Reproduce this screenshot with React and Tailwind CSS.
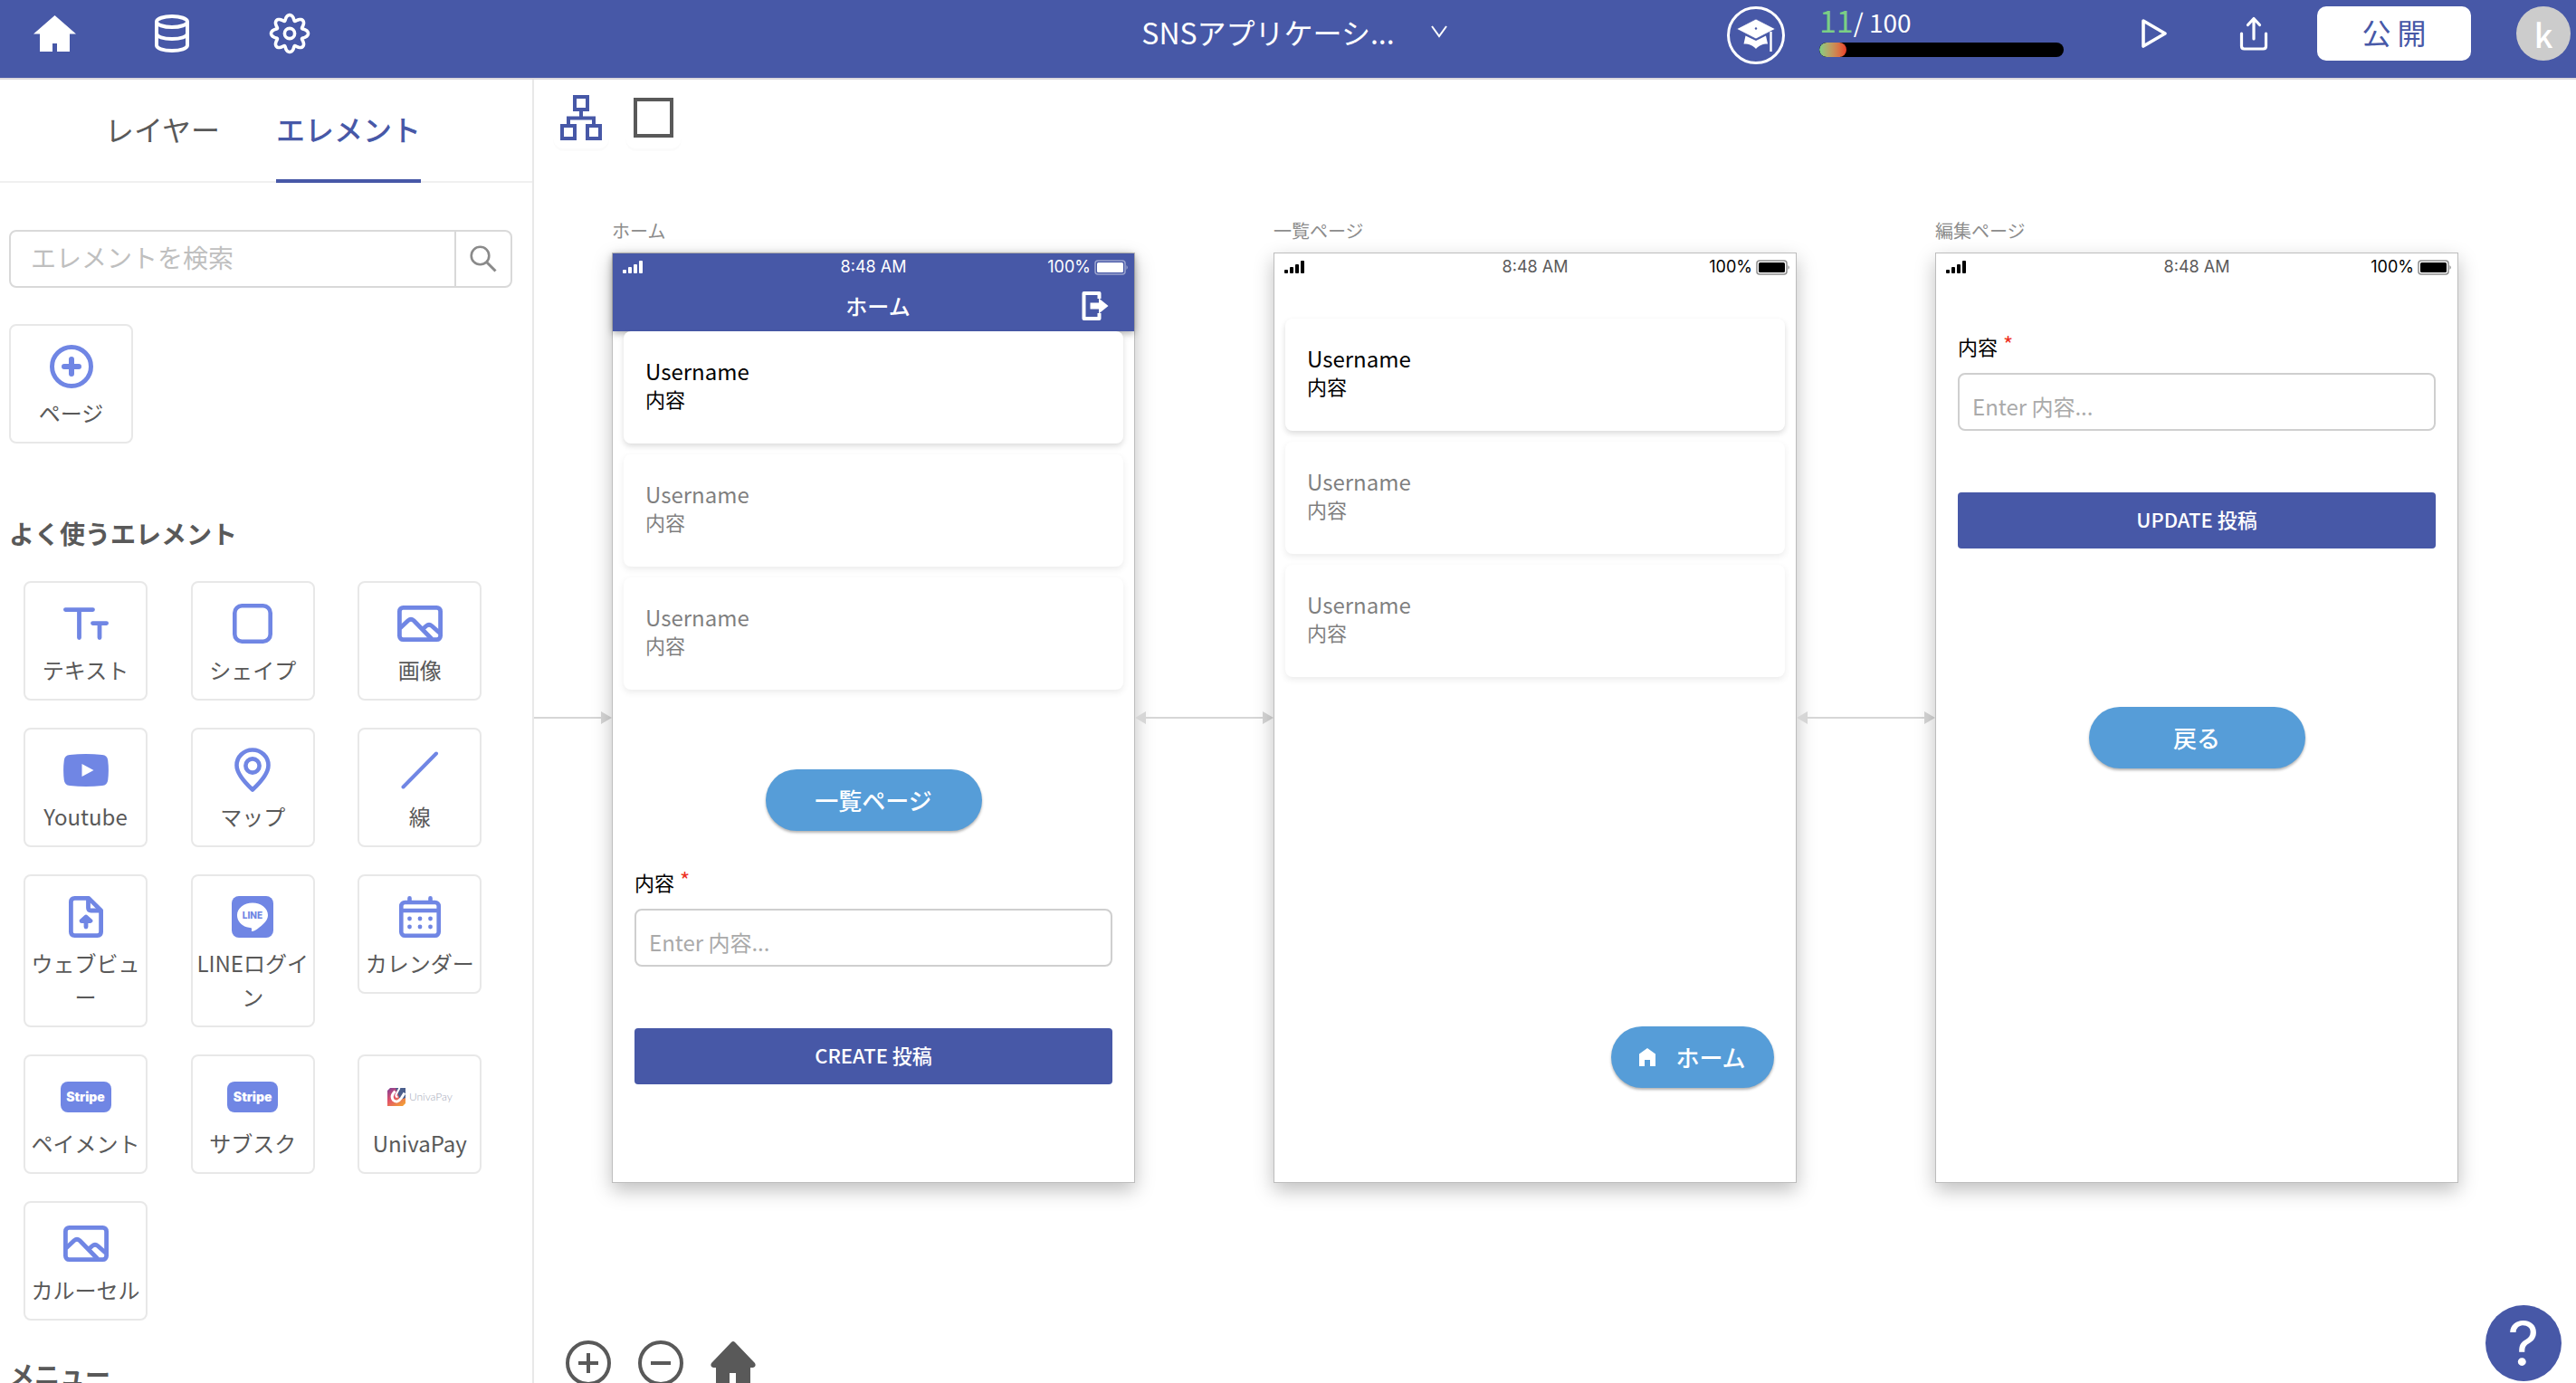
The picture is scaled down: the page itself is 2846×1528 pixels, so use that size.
import React, { useState } from "react";

const HomeIcon = () => (
  <svg width="47" height="40" viewBox="0 0 47 40" fill="currentColor">
    <path d="M23.5 0L47 20.5H40V40H26V31H21V40H7V20.5H0Z" />
  </svg>
);

const DatabaseIcon = () => (
  <svg width="38" height="42" viewBox="0 0 38 42" fill="none" stroke="currentColor" strokeWidth="4">
    <ellipse cx="19" cy="8" rx="17" ry="6" />
    <path d="M2 8V34C2 37.5 9.5 40 19 40S36 37.5 36 34V8" />
    <path d="M2 21C2 24.5 9.5 27 19 27S36 24.5 36 21" />
  </svg>
);

// eight soft teeth around the centre
const gearPath =
  Array.from({ length: 144 }, (_, i) => {
    const a = (i / 144) * Math.PI * 2;
    const r = 17.6 + 2.9 * Math.cos(8 * a);
    const twist = a + 0.04 * Math.sin(8 * a);
    const x = (23 + r * Math.cos(twist)).toFixed(2);
    const y = (23 + r * Math.sin(twist)).toFixed(2);
    return `${i ? "L" : "M"}${x} ${y}`;
  }).join("") + "Z";

const GearIcon = () => (
  <svg width="46" height="46" viewBox="0 0 46 46" fill="none" stroke="currentColor" strokeWidth="3.6" strokeLinejoin="round">
    <path d={gearPath} />
    <circle cx="23" cy="23" r="5.6" />
  </svg>
);

const GraduationIcon = () => (
  <svg width="64" height="64" viewBox="0 0 64 64" fill="none">
    <circle cx="32" cy="32" r="30.5" stroke="white" strokeWidth="3" />
    <path d="M20.5 32.5L32 38L43 32.5L45 41.5C39 41.5 35 43.5 32 47C29 43.5 25 41.5 18.5 41.5Z" fill="white" />
    <path d="M10.5 25L32 14L53.5 25L32 36Z" fill="white" stroke="#4758a7" strokeWidth="0.8" />
    <circle cx="32" cy="24.5" r="1.2" fill="#4758a7" />
    <path d="M48.5 28V50" stroke="white" strokeWidth="2.4" />
  </svg>
);

const PlayIcon = () => (
  <svg width="30" height="34" viewBox="0 0 30 34" fill="none" stroke="currentColor" strokeWidth="3.6" strokeLinejoin="round">
    <path d="M3 3L27 17L3 31Z" />
  </svg>
);

const ShareIcon = () => (
  <svg width="32" height="38" viewBox="0 0 32 38" fill="none" stroke="currentColor" strokeWidth="3.2" strokeLinecap="round" strokeLinejoin="round">
    <path d="M16 25V3M9.5 9.5L16 2.5L22.5 9.5" />
    <path d="M2.5 19V33Q2.5 36 5.5 36H26.5Q29.5 36 29.5 33V19" />
  </svg>
);

const SitemapIcon = () => (
  <svg width="46" height="50" viewBox="0 0 46 50" fill="none" stroke="currentColor" strokeWidth="4">
    <rect x="16" y="2" width="14" height="14" />
    <path d="M23 16V25M9 34V25.5H37V34" />
    <rect x="2" y="34" width="14" height="14" />
    <rect x="30" y="34" width="14" height="14" />
  </svg>
);

const SquareIcon = () => (
  <svg width="46" height="46" viewBox="0 0 46 46" fill="none" stroke="currentColor" strokeWidth="4">
    <rect x="3" y="3" width="40" height="40" />
  </svg>
);

const CircleIcon = ({ plus }) => (
  <svg width="50" height="50" viewBox="0 0 50 50" fill="none" stroke="currentColor" strokeWidth="4">
    <circle cx="25" cy="25" r="23" />
    <path d={plus ? "M14 25H36M25 14V36" : "M14 25H36"} />
  </svg>
);

const ZoomHomeIcon = () => (
  <svg width="50" height="50" viewBox="0 0 50 50" fill="currentColor">
    <path d="M23 2Q25 0 27 2L49 25Q51 29 47 30H44V50H28V36H21V50H6V30H3Q-1 29 1 25Z" />
  </svg>
);

const SearchIcon = () => (
  <svg width="30" height="30" viewBox="0 0 30 30" fill="none" stroke="currentColor" strokeWidth="2.6">
    <circle cx="11.5" cy="11.5" r="9.8" />
    <path d="M18.5 18.5L28.5 28.5" strokeWidth="3" />
  </svg>
);

const PageIcon = () => (
  <svg width="48" height="48" viewBox="0 0 48 48" fill="none" stroke="currentColor" strokeWidth="5" strokeLinecap="round">
    <circle cx="24" cy="24" r="21.5" />
    <path d="M16 24H32M24 16V32" strokeWidth="6" />
  </svg>
);

const TextIcon = () => (
  <svg width="50" height="36" viewBox="0 0 50 36" fill="none" stroke="currentColor" strokeWidth="4.8" strokeLinecap="round">
    <path d="M2.4 2.6H32.5M17.5 3V33.5M32.5 17.6H47.6M40 18V33.5" />
  </svg>
);

const ShapeIcon = () => (
  <svg width="44" height="44" viewBox="0 0 44 44" fill="none" stroke="currentColor" strokeWidth="4.6">
    <rect x="2.3" y="2.3" width="39.4" height="39.4" rx="8" />
  </svg>
);

const ImageIcon = () => (
  <svg width="50" height="40" viewBox="0 0 50 40" fill="none" stroke="currentColor" strokeWidth="4.8" strokeLinejoin="round">
    <rect x="2.4" y="2.4" width="45.2" height="35.2" rx="4" />
    <path d="M3 25L12 16.5Q15 14 18 16.5L38 37" />
    <path d="M28 26L32 22.5Q35 20 38 22.5L47 30.5" />
  </svg>
);

const YoutubeIcon = () => (
  <svg width="50" height="36" viewBox="0 0 50 36">
    <path d="M7 1Q25 -0.8 43 1Q48.5 1.5 49.2 7Q50.6 18 49.2 29Q48.5 34.5 43 35Q25 36.8 7 35Q1.5 34.5 0.8 29Q-0.6 18 0.8 7Q1.5 1.5 7 1Z" fill="currentColor" />
    <path d="M20.5 11L33.5 18L20.5 25Z" fill="white" />
  </svg>
);

const PinIcon = () => (
  <svg width="40" height="50" viewBox="0 0 40 50" fill="none" stroke="currentColor" strokeWidth="4.6" strokeLinejoin="round">
    <path d="M20 46.5C13 40 2.5 29 2.5 19.5A17.5 17 0 0 1 37.5 19.5C37.5 29 27 40 20 46.5Z" />
    <circle cx="20" cy="20" r="7.6" />
  </svg>
);

const LineIcon = () => (
  <svg width="42" height="42" viewBox="0 0 42 42" fill="none" stroke="currentColor" strokeWidth="4" strokeLinecap="round">
    <path d="M2.5 39.5L39 2.5" />
  </svg>
);

const WebviewIcon = () => (
  <svg width="38" height="46" viewBox="0 0 38 46" fill="none" stroke="currentColor" strokeWidth="4.8" strokeLinejoin="round" strokeLinecap="round">
    <path d="M6.5 2.4H22L35.6 16V39.6Q35.6 43.6 31.6 43.6H6.4Q2.4 43.6 2.4 39.6V6.4Q2.4 2.4 6.5 2.4Z" />
    <path d="M21.5 3V13Q21.5 16 24.5 16H35" />
    <path d="M19 34V25M14 27.5L19 23L24 27.5Z" />
  </svg>
);

const LineLoginIcon = () => (
  <svg width="46" height="46" viewBox="0 0 46 46">
    <rect width="46" height="46" rx="8" fill="currentColor" />
    <path d="M23 7.5C32.5 7.5 40 13.5 40 21C40 27 35 31 30 35C27 37.5 24 39 22.5 39C21 39 23 36 21.5 35.2C12 34.5 6 28.5 6 21C6 13.5 13.5 7.5 23 7.5Z" fill="white" />
    <text x="23" y="25" textAnchor="middle" fill="currentColor" className="font-['Inter'] text-[10px] font-extrabold">
      LINE
    </text>
  </svg>
);

const CalendarIcon = () => (
  <svg width="46" height="46" viewBox="0 0 46 46" fill="none" stroke="currentColor" strokeWidth="4.6" strokeLinecap="round">
    <rect x="2.3" y="7" width="41.4" height="36.7" rx="4" />
    <path d="M3 16H43M11.5 2.3V6M34.5 2.3V6" />
    {[25, 34].map((y) => [11.5, 23, 34.5].map((x) => <circle key={`${x}-${y}`} cx={x} cy={y} r="2.4" fill="currentColor" stroke="none" />))}
  </svg>
);

const StripeIcon = () => (
  <span className="flex h-[34px] w-14 items-center justify-center rounded-lg bg-[#7086e4] font-['Inter'] text-[14px] leading-none font-black text-white">
    Stripe
  </span>
);

const UnivaIcon = () => (
  <span className="flex items-center gap-1">
    <svg width="20" height="20" viewBox="0 0 20 20">
      <defs>
        <linearGradient id="univa" x1="0" y1="0" x2="0.7" y2="1">
          <stop offset="0" stopColor="#7b3f98" />
          <stop offset="0.5" stopColor="#e0506a" />
          <stop offset="1" stopColor="#f29a3a" />
        </linearGradient>
      </defs>
      <path d="M3 0H20V17L17 20H0V3Z" fill="url(#univa)" />
      <path d="M9 0H20V11L14 13Z" fill="#4b5f8c" />
      <path d="M8.5 3.5Q3 9 6.5 13.5Q11 17.5 15.5 11L19 5.5" fill="none" stroke="white" strokeWidth="3" />
      <path d="M13.5 0L9.5 7.5Q9 10.500 11.500 9.500" fill="none" stroke="white" strokeWidth="2" />
    </svg>
    <span className="font-['Lato'] text-[12px] leading-none font-light text-[#a3a8b8]">UnivaPay</span>
  </span>
);

const ExitIcon = () => (
  <svg width="30" height="32" viewBox="0 0 30 32" fill="none">
    <path d="M19.5 8V2H2.5V30H19.5V24" stroke="white" strokeWidth="4" strokeLinejoin="round" />
    <path d="M9.5 12.5H19V7.5L29.5 16L19 24.5V19.5H9.5Z" fill="white" />
  </svg>
);

const SmallHomeIcon = () => (
  <svg width="18" height="20" viewBox="0 0 18 20" fill="currentColor">
    <path d="M9 0L18 6.5V20H12V13H6V20H0V6.5Z" />
  </svg>
);

const elements = [
  { label: "テキスト", Icon: TextIcon },
  { label: "シェイプ", Icon: ShapeIcon },
  { label: "画像", Icon: ImageIcon },
  { label: "Youtube", Icon: YoutubeIcon },
  { label: "マップ", Icon: PinIcon },
  { label: "線", Icon: LineIcon },
  { label: "ウェブビュー", Icon: WebviewIcon },
  { label: "LINEログイン", Icon: LineLoginIcon },
  { label: "カレンダー", Icon: CalendarIcon },
  { label: "ペイメント", Icon: StripeIcon },
  { label: "サブスク", Icon: StripeIcon },
  { label: "UnivaPay", Icon: UnivaIcon },
  { label: "カルーセル", Icon: ImageIcon },
];

const HeaderButton = ({ label, children }) => (
  <button aria-label={label} className="flex h-[60px] w-20 items-center justify-center">
    {children}
  </button>
);

const Header = () => {
  const score = 11;

  return (
    <header className="flex shrink-0 items-center border-b-2 border-[#dcd8dc] bg-[#4758a7] pt-[7px] pr-1.5 pb-[19px] pl-5 text-white">
      <nav className="flex flex-1 gap-[50px]">
        <HeaderButton label="ホーム">
          <HomeIcon />
        </HeaderButton>
        <HeaderButton label="データベース">
          <DatabaseIcon />
        </HeaderButton>
        <HeaderButton label="設定">
          <GearIcon />
        </HeaderButton>
      </nav>

      <button className="flex items-center gap-10 pb-1 text-[32px] leading-10">
        SNSアプリケーシ...
        <svg width="18" height="14" viewBox="0 0 18 14" fill="none" stroke="currentColor" strokeWidth="2">
          <path d="M1 1L9 12L17 1" />
        </svg>
      </button>

      <div className="flex flex-1 items-center justify-end">
        <div className="flex h-[60px] items-start gap-[38px]">
          <GraduationIcon />
          <div>
            <p className="h-10 text-[28px] leading-[30px] whitespace-pre">
              <span className="text-[34px] text-[#7bcf85]">{score}</span>/ 100
            </p>
            <div className="h-4 w-[270px] overflow-hidden rounded-full bg-black">
              <div className="h-full rounded-full bg-linear-to-r from-[#7bcf85] to-[#ea3a28]" style={{ width: `${score}%` }} />
            </div>
          </div>
        </div>
        <div className="ml-[60px] flex gap-[30px]">
          <HeaderButton label="プレビュー">
            <PlayIcon />
          </HeaderButton>
          <HeaderButton label="共有">
            <ShareIcon />
          </HeaderButton>
          <button className="h-[60px] w-[170px] rounded-[10px] bg-white pb-1 text-[32px] leading-10 text-[#4758a7]">公 開</button>
        </div>
        <button className="ml-[50px] size-[60px] rounded-full bg-[#ccc] text-[36px] leading-none font-medium">k</button>
      </div>
    </header>
  );
};

const ElementCard = ({ label, Icon }) => (
  <button className="flex w-[137px] flex-col items-center rounded-lg border-2 border-[#e8e8e8] px-[2px] pt-[21px] pb-3.5">
    <span className="mb-2 flex h-12 items-center text-[#7086e4]">
      <Icon />
    </span>
    <span className="text-[24px] leading-[37px] break-all">{label}</span>
  </button>
);

const Sidebar = () => {
  const [tab, setTab] = useState("エレメント");

  return (
    <aside className="w-[590px] shrink-0 overflow-hidden border-r-2 border-[#e8e8e8]">
      <div className="flex gap-[62px] border-b-2 border-[#f0f0f0] pl-[116px]">
        {["レイヤー", "エレメント"].map((name) => (
          <button
            key={name}
            onClick={() => setTab(name)}
            className={`-mb-0.5 border-b-4 pt-[30px] pb-8 text-[32px] leading-[48px] ${
              tab === name ? "border-[#4758a7] font-medium text-[#4758a7]" : "border-transparent"
            }`}
          >
            {name}
          </button>
        ))}
      </div>

      <div className="px-2.5">
        <form className="mt-[52px] flex h-16 w-[556px] rounded-lg border-2 border-[#d9d9d9]" onSubmit={(e) => e.preventDefault()}>
          <input
            type="text"
            aria-label="エレメントを検索"
            placeholder="エレメントを検索"
            className="min-w-0 flex-1 px-[22px] pb-1 text-[28px] outline-none placeholder:text-[#bfbfbf]"
          />
          <button aria-label="検索" className="flex w-[62px] items-center justify-center border-l-2 border-[#d9d9d9] text-[#8a8a8a]">
            <SearchIcon />
          </button>
        </form>

        <div className="mt-10">
          <ElementCard label="ページ" Icon={PageIcon} />
        </div>

        <h2 className="mt-[78px] text-[28px] leading-[42px] font-bold">よく使うエレメント</h2>
        <div className="mt-8 ml-4 grid w-[554px] grid-cols-3 items-start gap-y-[30px]">
          {elements.map((item) => (
            <ElementCard key={item.label} {...item} />
          ))}
        </div>

        <h2 className="mt-[38px] text-[28px] leading-[42px] font-bold">メニュー</h2>
      </div>
    </aside>
  );
};

const StatusBar = ({ light }) => (
  <div className={`grid grid-cols-3 items-center px-[10px] font-['Inter'] text-[18px] leading-[30px] ${light ? "text-white" : "text-black"}`}>
    <svg width="24" height="16" viewBox="0 0 24 16" fill="currentColor">
      <rect x="1" y="11" width="4" height="4" rx="1" />
      <rect x="7" y="8" width="4" height="7" rx="1" />
      <rect x="13" y="5" width="4" height="10" rx="1" />
      <rect x="19" y="1" width="4" height="14" rx="1" />
    </svg>
    <span className={`text-center ${light ? "" : "text-[#5a5a5a]"}`}>8:48 AM</span>
    <span className="-mr-1 flex items-center justify-end gap-1">
      100%
      <svg width="38" height="17" viewBox="0 0 38 17" fill="none">
        <rect x="1" y="1" width="33" height="15" rx="3" stroke="currentColor" strokeOpacity="0.45" strokeWidth="1.5" />
        <rect x="3" y="3" width="29" height="11" rx="1.5" fill="currentColor" />
        <path d="M35.5 6Q38 8.5 35.5 11Z" fill="currentColor" fillOpacity="0.5" />
      </svg>
    </span>
  </div>
);

const PostList = () => (
  <ul className="flex flex-col gap-3 px-3">
    {[0, 1, 2].map((i) => (
      <li
        key={i}
        className={`rounded-lg bg-white px-6 pt-7 pb-9 shadow-[0_3px_6px_rgba(0,0,0,0.14)] ${i ? "opacity-50" : ""}`}
      >
        <p className="text-[24px] leading-8">Username</p>
        <p className="text-[22px] leading-7">内容</p>
      </li>
    ))}
  </ul>
);

const PostForm = ({ id, action }) => (
  <form className="px-6" onSubmit={(e) => e.preventDefault()}>
    <label htmlFor={id} className="flex gap-1.5 text-[22px] leading-7">
      内容
      <span className="text-[24px] leading-6 text-[#ee3124]">*</span>
    </label>
    <input
      id={id}
      type="text"
      placeholder="Enter 内容..."
      className="mt-4 block h-16 w-full rounded-lg border-2 border-[#cfcfcf] px-3.5 pt-2 text-[24px] outline-none placeholder:text-[#aaa]"
    />
    <button className="mt-[68px] block h-[62px] w-full rounded bg-[#4758a7] pb-1 text-[22px] leading-8 font-medium text-white">
      {action}
    </button>
  </form>
);

const PillButton = ({ children, className }) => (
  <button
    className={`flex h-[68px] items-center justify-center rounded-full bg-[#569dd8] text-[26px] leading-10 font-medium text-white shadow-[0_2px_3px_rgba(0,0,0,0.3)] ${className}`}
  >
    {children}
  </button>
);

const Phone = ({ name, children }) => (
  <section className="w-[578px] shrink-0">
    <h3 className="mb-2.5 text-[20px] leading-7 text-[#8c8c8c]">{name}</h3>
    <div className="flex h-[1028px] flex-col border border-[#bdbdbd] bg-white text-black shadow-[0_8px_20px_rgba(0,0,0,0.25)]">
      {children}
    </div>
  </section>
);

const Connector = ({ start, className }) => (
  <div className={`mt-[544px] flex h-4 shrink-0 items-center text-[#d6d6d6] ${className}`}>
    {start && (
      <svg width="12" height="14" viewBox="0 0 12 14" fill="currentColor">
        <path d="M0 7L12 0V14Z" />
      </svg>
    )}
    <span className="h-0.5 flex-1 bg-[#d6d6d6]" />
    <svg width="12" height="14" viewBox="0 0 12 14" fill="currentColor">
      <path d="M12 7L0 0V14Z" />
    </svg>
  </div>
);

const Canvas = () => (
  <main className="relative min-w-0 flex-1 overflow-hidden">
    <div className="flex gap-[18px] pt-2 pl-[21px]">
      <button aria-label="サイトマップ" className="flex h-[68px] w-[62px] items-center justify-center rounded-xl text-[#4758a7] shadow-[0_3px_0_rgba(0,0,0,0.015)]">
        <SitemapIcon />
      </button>
      <button aria-label="単一ページ" className="flex h-[68px] w-[62px] items-center justify-center rounded-xl shadow-[0_3px_0_rgba(0,0,0,0.015)]">
        <SquareIcon />
      </button>
    </div>

    <div className="mt-[77px] flex">
      <Connector className="w-[86px]" />
      <Phone name="ホーム">
        <div className="bg-[#4758a7] shadow-[0_2px_8px_rgba(0,0,0,0.35)]">
          <StatusBar light />
          <div className="flex h-14 items-center pr-7 pl-10 text-white">
            <h4 className="flex-1 pl-[28px] text-center text-[24px] leading-8 font-medium">ホーム</h4>
            <button aria-label="ログアウト">
              <ExitIcon />
            </button>
          </div>
        </div>
        <div className="relative">
          <PostList />
        </div>
        <PillButton className="mx-auto mt-[88px] w-[239px]">一覧ページ</PillButton>
        <div className="mt-[42px]">
          <PostForm id="create-content" action="CREATE 投稿" />
        </div>
      </Phone>
      <Connector start className="w-[153px]" />
      <Phone name="一覧ページ">
        <StatusBar />
        <div className="pt-[42px]">
          <PostList />
        </div>
        <PillButton className="mt-auto mr-6 mb-[104px] w-[180px] gap-[22px] self-end">
          <SmallHomeIcon />
          ホーム
        </PillButton>
      </Phone>
      <Connector start className="w-[153px]" />
      <Phone name="編集ページ">
        <StatusBar />
        <div className="pt-[58px]">
          <PostForm id="update-content" action="UPDATE 投稿" />
        </div>
        <PillButton className="mx-auto mt-[175px] w-[239px]">戻る</PillButton>
      </Phone>
    </div>

    <div className="absolute -bottom-4 left-[22px] flex gap-1">
      <button aria-label="拡大" className="flex size-[76px] items-center justify-center">
        <CircleIcon plus />
      </button>
      <button aria-label="縮小" className="flex size-[76px] items-center justify-center">
        <CircleIcon />
      </button>
      <button aria-label="ホームに戻る" className="flex size-[76px] items-center justify-center">
        <ZoomHomeIcon />
      </button>
    </div>

    <button
      aria-label="ヘルプ"
      className="absolute right-4 bottom-0.5 flex size-[84px] items-center justify-center rounded-full bg-[#4758a7] font-['Inter'] text-[68px] leading-[84px] text-white"
    >
      ?
    </button>
  </main>
);

const App = () => (
  <div className="flex h-screen flex-col overflow-hidden bg-white font-['Noto_Sans_CJK_JP',sans-serif] text-[#595959]">
    <Header />
    <div className="flex min-h-0 flex-1">
      <Sidebar />
      <Canvas />
    </div>
  </div>
);

export default App;
